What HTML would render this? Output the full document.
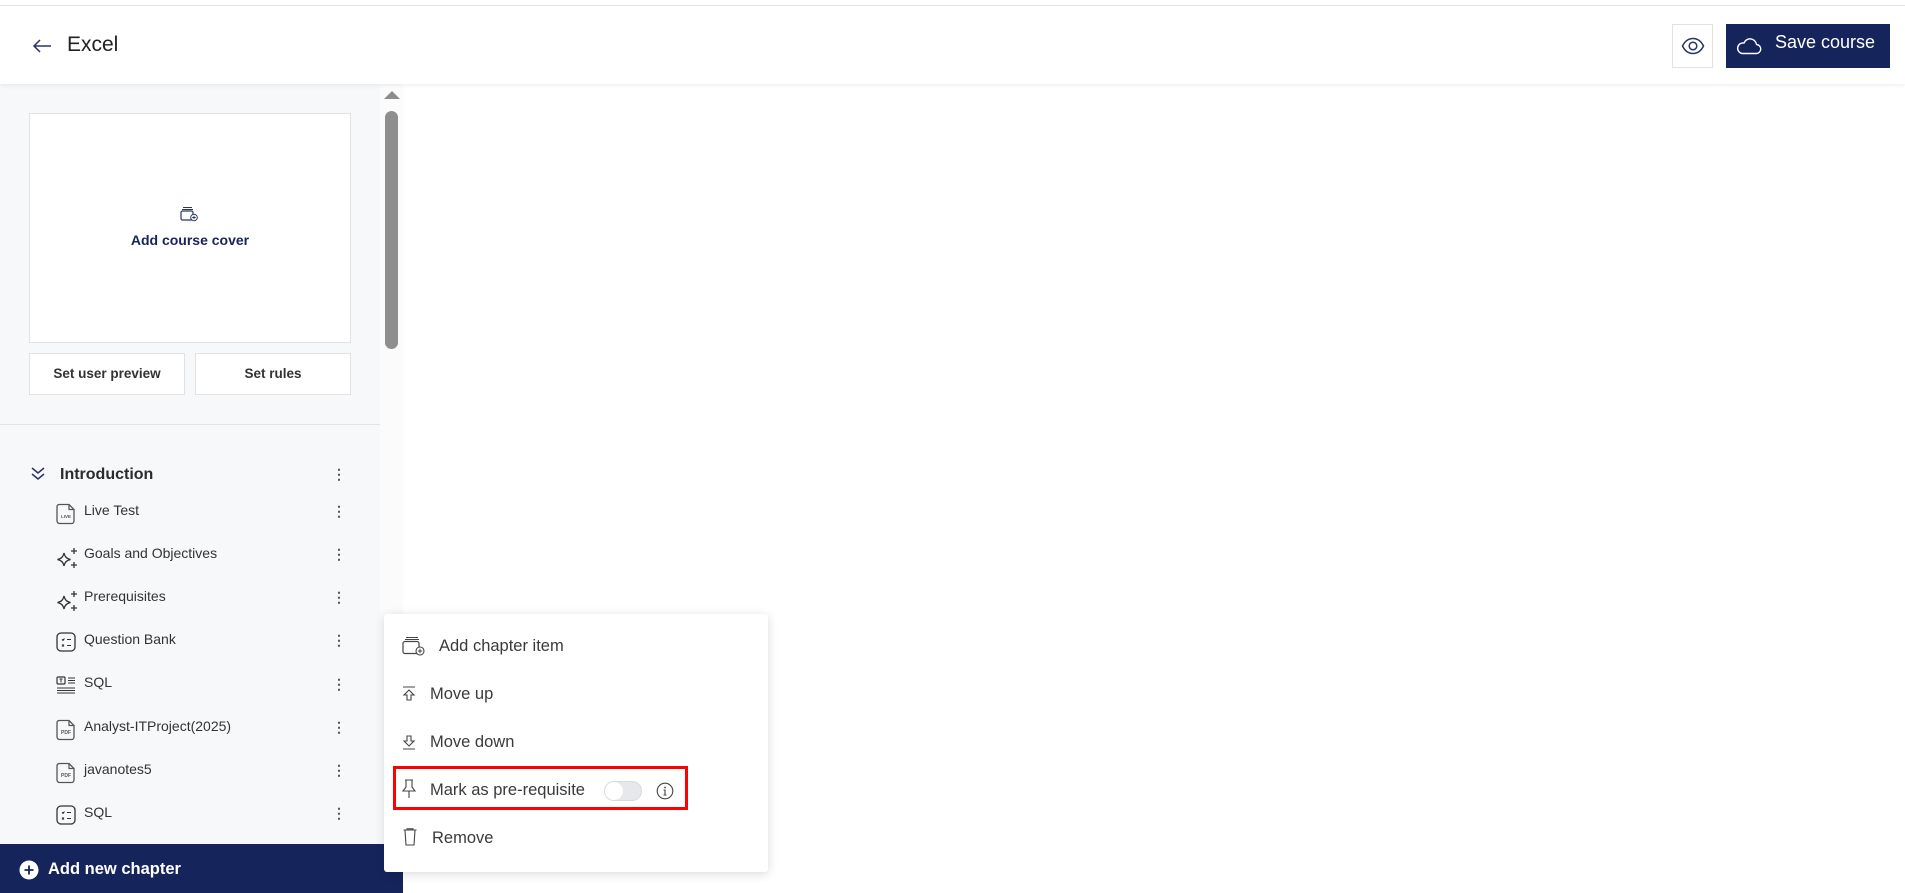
<!DOCTYPE html>
<html><head><meta charset="utf-8"><style>
*{margin:0;padding:0;box-sizing:border-box}
body{width:1905px;height:893px;overflow:hidden;background:#fff;font-family:"Liberation Sans",sans-serif;position:relative;color:#2b2b2b}
.a{position:absolute}
.topline{left:0;top:5px;width:1905px;height:1px;background:#e3e3e3}
.header{left:0;top:6px;width:1905px;height:78px;background:#fff;box-shadow:0 2px 4px rgba(0,0,0,.06);z-index:2}
.side{left:0;top:84px;width:380px;height:809px;background:#f7f8fa}
.sb{left:380px;top:84px;width:23px;height:809px;background:#fbfbfb}
.item{left:84px;font-size:14px;color:#333}
.dots{left:332px;font-size:14px;color:#555;width:6px;text-align:center;line-height:14px;font-weight:bold}
.mi{font-size:16.5px;color:#3a3a3a}
</style></head><body>
<div class="a topline"></div>
<div class="a header">
  <svg class="a" style="left:32px;top:32px" width="20" height="16" viewBox="0 0 20 16"><path d="M19 8H2M8 2L2 8l6 6" fill="none" stroke="#2a3566" stroke-width="1.5"/></svg>
  <div class="a" style="left:67px;top:27px;font-size:21px;color:#222">Excel</div>
  <div class="a" style="left:1672px;top:18px;width:41px;height:44px;border:1px solid #e2e2e2;background:#fff"></div>
  <svg class="a" style="left:1681px;top:30px" width="24" height="20" viewBox="0 0 24 20"><path d="M1.5 10C4 5 8 2.5 12 2.5S20 5 22.5 10C20 15 16 17.5 12 17.5S4 15 1.5 10Z" fill="none" stroke="#2a3566" stroke-width="1.5"/><circle cx="12" cy="10" r="3.8" fill="none" stroke="#2a3566" stroke-width="1.5"/></svg>
  <div class="a" style="left:1726px;top:18px;width:164px;height:44px;background:#16245c"></div>
  <svg class="a" style="left:1736px;top:29px" width="26" height="20" viewBox="0 0 26 20"><path d="M6 18.5h14a4.5 4.5 0 0 0 .5-9A6.5 6.5 0 0 0 8 8a5 5 0 0 0-2 10.5Z" fill="none" stroke="#fff" stroke-width="1.4"/></svg>
  <div class="a" style="left:1775px;top:26px;font-size:18px;color:#fff">Save course</div>
</div>
<div class="a side"></div>
<div class="a sb"></div>
<svg class="a" style="left:384px;top:91px" width="16" height="8"><path d="M0 8L8 0l8 8Z" fill="#8c8c8c"/></svg>
<div class="a" style="left:385px;top:111px;width:13px;height:238px;background:#8e8e8e;border-radius:7px"></div>
<div class="a" style="left:29px;top:113px;width:322px;height:230px;background:#fff;border:1px solid #e2e2e2"></div>
<svg class="a" style="left:180px;top:206px" width="20" height="16" viewBox="0 0 20 16"><path d="M3 1.5h9M2 3.5h11" stroke="#2a3566" stroke-width="1"/><rect x="1" y="5" width="12" height="9" rx="1.5" fill="none" stroke="#2a3566" stroke-width="1.2"/><circle cx="14" cy="11.5" r="3.3" fill="#fff" stroke="#2a3566" stroke-width="1"/><path d="M14 9.8v3.4M12.3 11.5h3.4" stroke="#2a3566" stroke-width="0.9"/></svg>
<div class="a" style="left:29px;top:232px;width:322px;text-align:center;font-size:14px;font-weight:bold;color:#16245c">Add course cover</div>
<div class="a" style="left:29px;top:353px;width:156px;height:42px;background:#fff;border:1px solid #e2e2e2;text-align:center;line-height:40px;font-size:13.5px;font-weight:bold;color:#333">Set user preview</div>
<div class="a" style="left:195px;top:353px;width:156px;height:42px;background:#fff;border:1px solid #e2e2e2;text-align:center;line-height:40px;font-size:13.5px;font-weight:bold;color:#333">Set rules</div>
<div class="a" style="left:0;top:424px;width:380px;height:1px;background:#e4e4e4"></div>
<svg class="a" style="left:30px;top:467px" width="16" height="14" viewBox="0 0 16 14"><path d="M2 1l6 5 6-5M2 7l6 5 6-5" fill="none" stroke="#2a3566" stroke-width="1.5"/></svg>
<div class="a" style="left:60px;top:466px;font-size:16px;font-weight:bold;color:#2b2b2b">Introduction</div>
<div class="a dots" style="top:467px">⋮</div>

<svg class="a" style="left:56px;top:503px" width="21" height="22" viewBox="0 0 21 22"><path d="M3 1.5h10l5 5V18a2.5 2.5 0 0 1-2.5 2.5h-12A2.5 2.5 0 0 1 1 18V4a2.5 2.5 0 0 1 2-2.5Z" fill="none" stroke="#555" stroke-width="1.3"/><path d="M13 1.5V6.5h5" fill="none" stroke="#555" stroke-width="1.2"/><text x="10" y="15" font-size="4.5" text-anchor="middle" fill="#555" font-family="Liberation Sans" font-weight="bold">LIVE</text></svg>
<div class="a item" style="top:502px">Live Test</div><div class="a dots" style="top:504px">⋮</div>

<svg class="a" style="left:54px;top:546px" width="26" height="24" viewBox="0 0 26 24"><path d="M10 7c1 4 2.5 5.5 6.5 6.5C12.5 14.5 11 16 10 20 9 16 7.5 14.5 3.5 13.5 7.5 12.5 9 11 10 7Z" fill="none" stroke="#333" stroke-width="1.3"/><path d="M20 2v6M17 5h6M20 16v6M17 19h6" stroke="#333" stroke-width="1.3"/></svg>
<div class="a item" style="top:545px">Goals and Objectives</div><div class="a dots" style="top:547px">⋮</div>

<svg class="a" style="left:54px;top:589px" width="26" height="24" viewBox="0 0 26 24"><path d="M10 7c1 4 2.5 5.5 6.5 6.5C12.5 14.5 11 16 10 20 9 16 7.5 14.5 3.5 13.5 7.5 12.5 9 11 10 7Z" fill="none" stroke="#333" stroke-width="1.3"/><path d="M20 2v6M17 5h6M20 16v6M17 19h6" stroke="#333" stroke-width="1.3"/></svg>
<div class="a item" style="top:588px">Prerequisites</div><div class="a dots" style="top:590px">⋮</div>

<svg class="a" style="left:56px;top:632px" width="21" height="21" viewBox="0 0 21 21"><rect x="1" y="1" width="18" height="18" rx="4" fill="none" stroke="#333" stroke-width="1.3"/><path d="M6 7.5l1 1 1.5-2M11 7.5h4M6 12.5l2 2M8 12.5l-2 2M11 13.5h4" stroke="#333" stroke-width="1"/></svg>
<div class="a item" style="top:631px">Question Bank</div><div class="a dots" style="top:633px">⋮</div>

<svg class="a" style="left:56px;top:676px" width="21" height="20" viewBox="0 0 21 20"><rect x="1" y="1" width="8" height="7" rx="1" fill="none" stroke="#333" stroke-width="1.2"/><path d="M3.5 3h3M5 3v3.5M12 2h7M12 4.5h7M12 7h7M1 12h18M1 14.5h18M1 17h18" stroke="#333" stroke-width="1"/></svg>
<div class="a item" style="top:674px">SQL</div><div class="a dots" style="top:677px">⋮</div>

<svg class="a" style="left:56px;top:719px" width="21" height="22" viewBox="0 0 21 22"><path d="M3 1.5h10l5 5V18a2.5 2.5 0 0 1-2.5 2.5h-12A2.5 2.5 0 0 1 1 18V4a2.5 2.5 0 0 1 2-2.5Z" fill="none" stroke="#555" stroke-width="1.3"/><path d="M13 1.5V6.5h5" fill="none" stroke="#555" stroke-width="1.2"/><text x="10" y="15" font-size="5" text-anchor="middle" fill="#555" font-family="Liberation Sans" font-weight="bold">PDF</text></svg>
<div class="a item" style="top:718px">Analyst-ITProject(2025)</div><div class="a dots" style="top:720px">⋮</div>

<svg class="a" style="left:56px;top:762px" width="21" height="22" viewBox="0 0 21 22"><path d="M3 1.5h10l5 5V18a2.5 2.5 0 0 1-2.5 2.5h-12A2.5 2.5 0 0 1 1 18V4a2.5 2.5 0 0 1 2-2.5Z" fill="none" stroke="#555" stroke-width="1.3"/><path d="M13 1.5V6.5h5" fill="none" stroke="#555" stroke-width="1.2"/><text x="10" y="15" font-size="5" text-anchor="middle" fill="#555" font-family="Liberation Sans" font-weight="bold">PDF</text></svg>
<div class="a item" style="top:761px">javanotes5</div><div class="a dots" style="top:763px">⋮</div>

<svg class="a" style="left:56px;top:805px" width="21" height="21" viewBox="0 0 21 21"><rect x="1" y="1" width="18" height="18" rx="4" fill="none" stroke="#333" stroke-width="1.3"/><path d="M6 7.5l1 1 1.5-2M11 7.5h4M6 12.5l2 2M8 12.5l-2 2M11 13.5h4" stroke="#333" stroke-width="1"/></svg>
<div class="a item" style="top:804px">SQL</div><div class="a dots" style="top:806px">⋮</div>

<div class="a" style="left:0;top:844px;width:403px;height:49px;background:#16245c"></div>
<svg class="a" style="left:19px;top:860px" width="20" height="20" viewBox="0 0 20 20"><circle cx="10" cy="10" r="9.5" fill="#fff"/><path d="M10 5.5v9M5.5 10h9" stroke="#16245c" stroke-width="1.8"/></svg>
<div class="a" style="left:48px;top:860px;font-size:16.5px;font-weight:bold;color:#fff">Add new chapter</div>

<div class="a" style="left:384px;top:614px;width:384px;height:258px;background:#fff;border-radius:3px;box-shadow:0 2px 10px rgba(0,0,0,.15)"></div>
<svg class="a" style="left:402px;top:636px" width="24" height="20" viewBox="0 0 24 20"><path d="M4 1.5h12M3 3.5h14" stroke="#444" stroke-width="1"/><rect x="1" y="5.5" width="16" height="12" rx="2" fill="none" stroke="#444" stroke-width="1.2"/><circle cx="18" cy="15" r="4" fill="#fff" stroke="#444" stroke-width="1.1"/><path d="M18 12.8v4.4M15.8 15h4.4" stroke="#444" stroke-width="1"/></svg>
<div class="a mi" style="left:439px;top:637px">Add chapter item</div>
<svg class="a" style="left:402px;top:686px" width="14" height="16" viewBox="0 0 14 16"><path d="M1 1h12M7 4l-5 5h3v5h4V9h3Z" fill="none" stroke="#444" stroke-width="1.1"/></svg>
<div class="a mi" style="left:430px;top:685px">Move up</div>
<svg class="a" style="left:402px;top:734px" width="14" height="16" viewBox="0 0 14 16"><path d="M1 15h12M7 12l-5-5h3V2h4v5h3Z" fill="none" stroke="#444" stroke-width="1.1"/></svg>
<div class="a mi" style="left:430px;top:733px">Move down</div>
<div class="a" style="left:393px;top:766px;width:295px;height:44px;border:3px solid #f00"></div>
<svg class="a" style="left:402px;top:779px" width="14" height="20" viewBox="0 0 14 20"><path d="M3 1h8M4 1v7l-3 4h12l-3-4V1M7 12v7" fill="none" stroke="#444" stroke-width="1.1"/></svg>
<div class="a mi" style="left:430px;top:781px">Mark as pre-requisite</div>
<div class="a" style="left:604px;top:781px;width:38px;height:20px;border-radius:10px;background:#e6e8ec;border:1px solid #d8dadf"></div>
<div class="a" style="left:605px;top:782px;width:18px;height:18px;border-radius:50%;background:#fff"></div>
<svg class="a" style="left:656px;top:782px" width="18" height="18" viewBox="0 0 18 18"><circle cx="9" cy="9" r="7.8" fill="none" stroke="#444" stroke-width="1.1"/><circle cx="9" cy="5.5" r="0.9" fill="#444"/><path d="M7.5 8h1.5v5M7.5 13h3" stroke="#444" stroke-width="1.1" fill="none"/></svg>
<svg class="a" style="left:403px;top:828px" width="14" height="18" viewBox="0 0 14 18"><path d="M0.5 2h13M4 2V0.8h6V2M2 2l1 15h8l1-15" fill="none" stroke="#444" stroke-width="1.1"/></svg>
<div class="a mi" style="left:432px;top:829px">Remove</div>
</body></html>
